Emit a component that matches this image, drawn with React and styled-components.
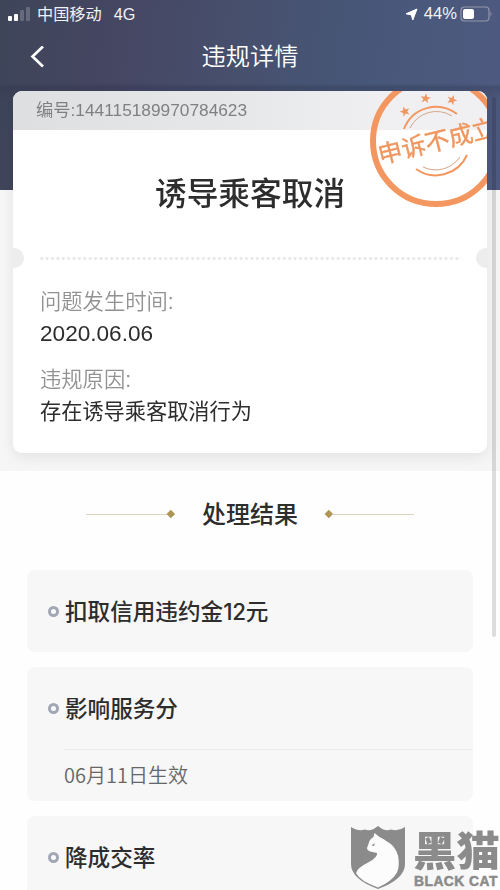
import React from "react";
import styled, { createGlobalStyle } from "styled-components";

const GlobalStyle = createGlobalStyle`
  * { box-sizing: border-box; }
  body { margin: 0; background: #fff; }
`;

const Page = styled.main`
  position: relative;
  width: 500px;
  height: 890px;
  overflow: hidden;
  background: #fefefe;
  color: #2d2d2d;
  font-family: "Liberation Sans", "Noto Sans CJK SC", sans-serif;
`;

const Hero = styled.section`
  height: 471px;
  background:
    linear-gradient(180deg, rgba(40, 46, 72, 0) 0, rgba(40, 46, 72, 0) 84px, rgba(40, 46, 72, 0.28) 87px, rgba(40, 46, 72, 0.05) 100px, rgba(40, 46, 72, 0) 190px) 0 0 / 100% 190px no-repeat,
    linear-gradient(97deg, #3e4559 0%, #454662 22%, #47506d 48%, #475779 72%, #4f5a80 100%) 0 0 / 100% 190px no-repeat,
    #f6f6f6;
`;

const StatusBar = styled.header`
  display: flex;
  align-items: center;
  height: 28px;
  padding: 0 7px 0 8px;
  color: #f1f2f6;
  font-size: 16.2px;
  line-height: 28px;
`;

const Signal = styled.div`
  display: flex;
  align-items: flex-end;
  gap: 2px;
  width: 29px;
  height: 14px;
`;

const Bar = styled.i`
  width: 4px;
  height: ${(p) => p.$h}px;
  border-radius: 1px;
  background: ${(p) => (p.$on ? "#fff" : "rgba(255,255,255,0.2)")};
`;

const Network = styled.span`
  margin-left: 12px;
`;

const Power = styled.div`
  display: flex;
  align-items: center;
  margin-left: auto;

  span { margin: 0 3px 0 6px; font-size: 16.6px; }
`;

const NavBar = styled.nav`
  display: grid;
  grid-template-columns: 60px 1fr 60px;
  align-items: center;
  height: 57px;
  color: #fff;

  svg { margin-left: 29px; }
`;

const NavTitle = styled.h1`
  margin: 0;
  text-align: center;
  font-size: 24.2px;
  font-weight: 350;
  line-height: 54px;
`;

const Card = styled.article`
  position: relative;
  width: 474px;
  height: 362px;
  margin: 6px 13px 0;
  overflow: hidden;
  border-radius: 9px;
  background: #fff;
`;

const CardShadow = styled.div`
  border-radius: 9px;
  filter: drop-shadow(0 4px 7px rgba(0, 0, 0, 0.08));
`;

const Serial = styled.div`
  height: 39px;
  padding-left: 23px;
  background: linear-gradient(90deg, #dedfe1, #e6e7e9 45%, #f0f0f2 80%);
  color: #808083;
  font-size: 17.3px;
  line-height: 39px;
`;

const CardTitle = styled.h2`
  margin: 0;
  height: 124px;
  text-align: center;
  font-size: 31.7px;
  font-weight: 500;
  line-height: 129px;
`;

const Perforation = styled.div`
  display: flex;
  align-items: center;
  justify-content: space-between;
  height: 20px;
  margin-top: -6px;
`;

const Notch = styled.i`
  width: 20px;
  height: 20px;
  margin: 0 -9px;
  border-radius: 50%;
  background: #ededee;
`;

const Dots = styled.i`
  width: 422px;
  height: 3px;
  background: radial-gradient(circle, #e7e7e7 1.3px, transparent 1.7px) 0 0 / 5.4px 3px repeat-x;
`;

const Details = styled.dl`
  margin: 0;
  padding: 18px 27px 0;
`;

const Label = styled.dt`
  height: 32px;
  color: #929292;
  font-size: 21.3px;
  font-weight: 350;
  line-height: 32px;
`;

const Value = styled.dd`
  height: 32px;
  margin: 0 0 14px;
  font-size: ${(p) => p.$size}px;
  line-height: 32px;
`;

const Stamp = styled.svg`
  position: absolute;
  left: 355px;
  top: -18px;
  width: 136px;
  height: 136px;
`;

const Results = styled.section`
  padding: 0 27px;
`;

const SectionTitle = styled.h2`
  display: flex;
  align-items: center;
  justify-content: center;
  gap: 27px;
  height: 99px;
  margin: 0;
  padding-bottom: 13px;
  font-size: 24px;
  font-weight: 500;

  span { margin-top: -4px; }
`;

const Ornament = styled.i`
  display: flex;
  align-items: center;
  flex-direction: ${(p) => (p.$flip ? "row-reverse" : "row")};
  width: 89px;

  &::before { content: ""; flex: 1; height: 1px; background: #ddd4bf; }
  &::after { content: ""; width: 5.6px; height: 5.6px; margin: 0 1px; background: #ae9455; transform: rotate(45deg); }
`;

const ResultCard = styled.article`
  width: 446px;
  height: ${(p) => p.$height}px;
  margin-bottom: 15px;
  border-radius: 8px;
  background: #f7f7f7;
`;

const ResultTitle = styled.h3`
  display: flex;
  align-items: center;
  gap: 6px;
  height: 82px;
  margin: 0;
  padding-left: 21px;
  font-size: 22.6px;
  font-weight: 500;

  span { margin-top: -1px; }
`;

const TitleNumber = styled.b`
  font-family: "Inter", sans-serif;
  font-size: 22.4px;
  font-weight: 500;
  letter-spacing: -0.2px;
`;

const Ring = styled.i`
  width: 11px;
  height: 11px;
  border: 3px solid #a2a7b5;
  border-radius: 50%;
  background: #fcfcfc;
`;

const Effective = styled.p`
  height: 52px;
  margin: 0 0 0 37px;
  border-top: 1px solid #ebebeb;
  color: #666;
  font-family: "Noto Sans CJK SC", sans-serif;
  font-size: 20px;
  font-weight: 350;
  line-height: 49px;
`;

const Scrollbar = styled.div`
  position: absolute;
  right: 4px;
  top: 97px;
  width: 4px;
  height: 540px;
  border-radius: 2px;
  background: rgba(0, 0, 0, 0.13);
`;

const Watermark = styled.aside`
  position: absolute;
  left: 350px;
  top: 826px;
  display: flex;
  gap: 6px;
  width: 150px;
  color: #8b8b8b;

  svg { flex: none; }
`;

const Brand = styled.div`
  white-space: nowrap;
`;

const BrandName = styled.div`
  height: 47px;
  font-family: "Noto Sans CJK SC", sans-serif;
  font-size: 43.4px;
  font-weight: 900;
  line-height: 47px;
  transform: scaleY(0.93);
  transform-origin: 0 40%;
`;

const BrandLatin = styled.div`
  padding-left: 1px;
  font-family: "Liberation Sans", sans-serif;
  font-size: 13.8px;
  font-weight: 700;
  line-height: 17px;
  letter-spacing: 0.5px;
  -webkit-text-stroke: 0.5px #8b8b8b;
`;

const star = "0,-5.4 1.3,-1.7 5.2,-1.6 2.1,0.7 3.2,4.4 0,2.1 -3.2,4.4 -2.1,0.7 -5.2,-1.6 -1.3,-1.7";
const stars = [
  [-31, -29.5, -20],
  [-10.5, -42.5, 8],
  [16, -41, 22],
];

function RejectedStamp() {
  return (
    <Stamp viewBox="-68 -68 136 136" fill="none" stroke="#f3965f">
      <circle r="63" strokeWidth="6" />
      <path d="M-32-12A34.2 34.2 0 0 1 21-27M-20 28A34.2 34.2 0 0 0 31 14" strokeWidth="2" />
      <path d="M-26-13A29.3 29.3 0 0 1 16-25M-13 26A29.3 29.3 0 0 0 24 16" stroke="#d5a58a" strokeWidth="1" />
      <g fill="#f0965f" stroke="none">
        {stars.map(([x, y, r]) => (
          <polygon key={x} points={star} transform={`translate(${x} ${y}) rotate(${r})`} />
        ))}
        <text
          transform="rotate(-14)"
          textAnchor="middle"
          x="1"
          y="9"
          fontSize="24.2"
          fontWeight="400"
          stroke="#f0965f"
          strokeWidth="0.4"
          fontFamily="Noto Sans CJK SC, sans-serif"
        >
          申诉不成立
        </text>
      </g>
    </Stamp>
  );
}

function ResultItem({ title, effective, height }) {
  return (
    <ResultCard $height={height}>
      <ResultTitle><Ring /><span>{title}</span></ResultTitle>
      {effective && <Effective>{effective}</Effective>}
    </ResultCard>
  );
}

export default function App() {
  return (
    <Page>
      <GlobalStyle />
      <Hero>
        <StatusBar>
          <Signal>
            <Bar $h={5} $on /><Bar $h={7} $on /><Bar $h={11} /><Bar $h={14} />
          </Signal>
          <span>中国移动</span>
          <Network>4G</Network>
          <Power>
            <svg width="13" height="13" viewBox="0 0 13 13" fill="#fff" stroke="#fff" strokeLinejoin="round">
              <path d="M12 1 7.800 12 6.300 6.900 1 5.800z" />
            </svg>
            <span>44%</span>
            <svg width="33" height="16" viewBox="0 0 33 16">
              <rect x="1" y="1" width="28" height="14" rx="3.5" fill="none" stroke="#9298aa" strokeWidth="1.2" />
              <rect x="3" y="3" width="11" height="10" rx="2" fill="#fff" />
              <path d="M30.5 5.5q2 2.500 0 5z" fill="#9298aa" />
            </svg>
          </Power>
        </StatusBar>
        <NavBar>
          <svg width="17" height="22" viewBox="0 0 17 22" fill="none" stroke="#fff" strokeWidth="2.7">
            <path d="M14 .5 3.500 10.500l10.500 10" />
          </svg>
          <NavTitle>违规详情</NavTitle>
        </NavBar>
        <CardShadow>
          <Card>
            <Serial>编号:144115189970784623</Serial>
            <CardTitle>诱导乘客取消</CardTitle>
            <Perforation><Notch /><Dots /><Notch /></Perforation>
            <Details>
              <Label>问题发生时间:</Label>
              <Value $size={22.6}>2020.06.06</Value>
              <Label>违规原因:</Label>
              <Value $size={21.2}>存在诱导乘客取消行为</Value>
            </Details>
            <RejectedStamp />
          </Card>
        </CardShadow>
      </Hero>
      <Results>
        <SectionTitle><Ornament /><span>处理结果</span><Ornament $flip /></SectionTitle>
        <ResultItem title={<>扣取信用违约金<TitleNumber>12</TitleNumber>元</>} height={82} />
        <ResultItem title="影响服务分" effective="06月11日生效" height={134} />
        <ResultItem title="降成交率" height={134} />
      </Results>
      <Scrollbar />
      <Watermark>
        <svg width="57" height="64" viewBox="0 0 57 64">
          <path d="M1 1q8 5 14 2.500Q21 6 28 0q7 6 13 3.500Q48 6 55 1v37q0 15-27 25Q1 53 1 38z" fill="#8b8b8b" />
          <path d="M24.500 7 23.500 11q-4 2-5 7l-1.500 4q0 3 5.500 4l4.500 1q1 4-8 9Q7 42 6 47q4 8 22 14.500 14-6 19-15 3-7 1-17-3-10-11-14Q34 13 29.500 11z" fill="#fcfcfc" />
          <path d="m21.500 19.500 3.500-2.500-1 3z" fill="#8b8b8b" />
        </svg>
        <Brand>
          <BrandName>黑猫</BrandName>
          <BrandLatin>BLACK CAT</BrandLatin>
        </Brand>
      </Watermark>
    </Page>
  );
}
